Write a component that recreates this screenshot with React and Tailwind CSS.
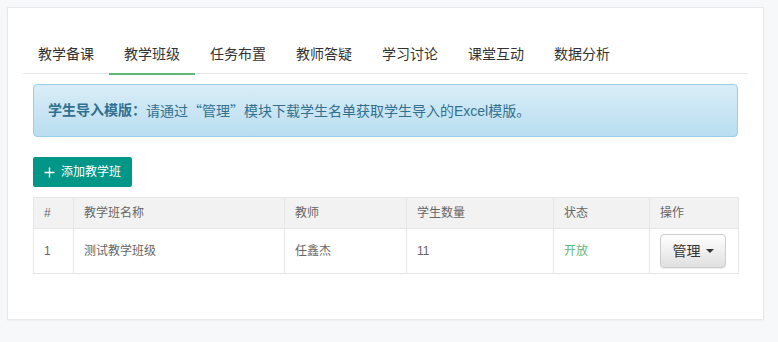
import React from "react";

const tabs = ["教学备课", "教学班级", "任务布置", "教师答疑", "学习讨论", "课堂互动", "数据分析"];

export default function App() {
  return (
    <div
      className="min-h-[342px] w-full bg-[#f7f8fa] pt-[7px] pl-[7px]"
      style={{ fontFamily: '"Liberation Sans", "Noto Sans CJK SC", sans-serif' }}
    >
      <div className="w-[757px] border border-[#e6e8eb] bg-white pt-[28px] pb-[45px] shadow-[0_1px_2px_rgba(0,0,0,0.04)]">
        {/* tabs */}
        <div className="mx-[15px] flex border-b border-[#e6e6e6]">
          {tabs.map((t, i) => (
            <div
              key={t}
              className="relative flex h-[37px] w-[86px] items-center justify-center text-[14px] text-[#333]"
            >
              {t}
              {i === 1 && (
                <span className="absolute bottom-[-2px] left-0 h-[2px] w-full bg-[#5fb878]" />
              )}
            </div>
          ))}
        </div>

        <div className="px-[25px] pt-[10px]">
          {/* alert */}
          <div className="flex h-[53px] items-center rounded-[4px] border border-[#9acfea] bg-gradient-to-b from-[#d9edf7] to-[#b9def0] px-[14px] text-[14px] text-[#31708f]">
            <b className="font-bold">学生导入模版：</b>
            <span>
              请通过<span className="font-['Noto_Sans_CJK_SC']">“</span>管理
              <span className="font-['Noto_Sans_CJK_SC']">”</span>模块下载学生名单获取学生导入的Excel模版。
            </span>
          </div>

          {/* add button */}
          <div className="mt-[20px] flex">
            <button className="flex h-[30px] w-[99px] items-center rounded-[2px] bg-[#009688] pl-[11px] text-[12px] text-white">
              <svg width="11" height="11" viewBox="0 0 11 11" className="mr-[6px]">
                <path d="M5.5 0.5v10M0.5 5.5h10" stroke="white" strokeWidth="1.4" fill="none" />
              </svg>
              添加教学班
            </button>
          </div>

          {/* table */}
          <table className="mt-[10px] w-[705px] table-fixed border-collapse text-[12px] text-[#666]">
            <colgroup>
              <col className="w-[40px]" />
              <col className="w-[211px]" />
              <col className="w-[122px]" />
              <col className="w-[147px]" />
              <col className="w-[96px]" />
              <col className="w-[89px]" />
            </colgroup>
            <thead>
              <tr className="h-[31px] bg-[#f2f2f2]">
                {["#", "教学班名称", "教师", "学生数量", "状态", "操作"].map((h) => (
                  <th key={h} className="border border-[#e6e6e6] px-[10px] text-left font-normal">
                    {h}
                  </th>
                ))}
              </tr>
            </thead>
            <tbody>
              <tr className="h-[45px]">
                <td className="border border-[#e6e6e6] px-[10px]">1</td>
                <td className="border border-[#e6e6e6] px-[10px]">测试教学班级</td>
                <td className="border border-[#e6e6e6] px-[10px]">任鑫杰</td>
                <td className="border border-[#e6e6e6] px-[10px]">11</td>
                <td className="border border-[#e6e6e6] px-[10px] text-[#5fb878]">开放</td>
                <td className="border border-[#e6e6e6] px-[10px]">
                  <button className="flex h-[34px] w-[66px] items-center justify-center rounded-[4px] border border-[#ccc] bg-gradient-to-b from-white to-[#e0e0e0] text-[14px] text-[#333] shadow-[inset_0_1px_0_rgba(255,255,255,0.15),0_1px_1px_rgba(0,0,0,0.075)]">
                    管理
                    <span className="ml-[5px] h-0 w-0 border-x-[4px] border-t-[4px] border-x-transparent border-t-[#333]" />
                  </button>
                </td>
              </tr>
            </tbody>
          </table>
        </div>
      </div>
    </div>
  );
}
